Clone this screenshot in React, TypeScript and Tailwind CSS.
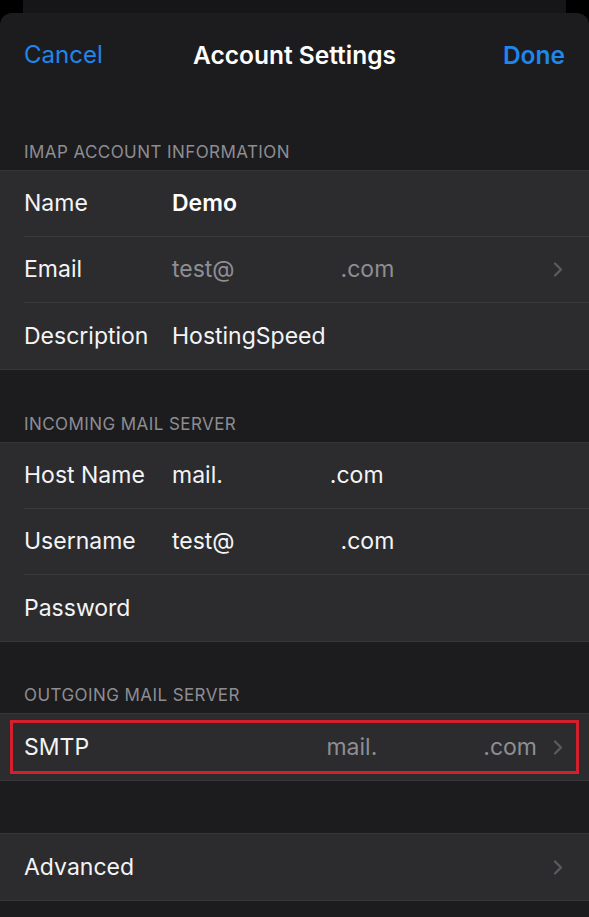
import type { ReactNode } from 'react';

const font = { fontFamily: 'Inter, "Noto Sans", "Liberation Sans", sans-serif' };

function Chevron() {
  return (
    <svg width="10" height="17" viewBox="0 0 10 17" className="shrink-0">
      <path d="M2 2.5 L8 8.5 L2 14.5" fill="none" stroke="#5b5b60" strokeWidth="2.2" strokeLinecap="round" strokeLinejoin="round" />
    </svg>
  );
}

function Gap({ w }: { w: string }) {
  return <span className={`inline-block ${w}`} />;
}

function SectionHeader({ title, h }: { title: string; h: string }) {
  return (
    <div className={`${h} flex items-end px-6 pb-[8px]`}>
      <span className="text-[17px] leading-5 tracking-[0.025em] text-[#8d8d93]">{title}</span>
    </div>
  );
}

function Row({ label, children, chevron, last }: { label: string; children?: ReactNode; chevron?: boolean; last?: boolean }) {
  return (
    <div className="pl-6 h-[66px] flex">
      <div className={`flex-1 flex items-center pr-[26px] ${last ? '' : 'border-b border-[#3a3a3c]'}`}>
        <span className="w-[148px] shrink-0 text-[23px] text-[#f4f4f6]">{label}</span>
        <div className="flex-1 flex items-center text-[23px]">{children}</div>
        {chevron && <Chevron />}
      </div>
    </div>
  );
}

function Group({ children }: { children: ReactNode }) {
  return <div className="bg-[#2c2c2e] border-y border-[#363638]">{children}</div>;
}

export default function App() {
  return (
    <div className="h-[917px] w-[589px] bg-black flex flex-col overflow-hidden" style={font}>
      <div className="mx-[23px] h-[13px] bg-[#161618] shrink-0" />
      <div className="flex-1 bg-[#1c1c1e] rounded-t-[12px]">
        {/* nav */}
        <div className="relative h-[84px] flex items-center justify-between px-6">
          <span className="text-[24px] text-[#1f86ea]">Cancel</span>
          <span className="absolute left-0 right-0 text-center text-[24.5px] font-semibold text-white pointer-events-none">
            Account Settings
          </span>
          <span className="text-[24.5px] font-semibold text-[#1f86ea]">Done</span>
        </div>

        <SectionHeader title="IMAP ACCOUNT INFORMATION" h="h-[73px]" />
        <Group>
          <Row label="Name">
            <span className="font-semibold text-white">Demo</span>
          </Row>
          <Row label="Email" chevron>
            <span className="text-[#8e8e93]">
              test@<Gap w="w-[106px]" />.com
            </span>
          </Row>
          <Row label="Description" last>
            <span className="text-[#f4f4f6]">HostingSpeed</span>
          </Row>
        </Group>

        <SectionHeader title="INCOMING MAIL SERVER" h="h-[72px]" />
        <Group>
          <Row label="Host Name">
            <span className="text-[#f4f4f6]">
              mail.<Gap w="w-[107px]" />.com
            </span>
          </Row>
          <Row label="Username">
            <span className="text-[#f4f4f6]">
              test@<Gap w="w-[106px]" />.com
            </span>
          </Row>
          <Row label="Password" last />
        </Group>

        <SectionHeader title="OUTGOING MAIL SERVER" h="h-[71px]" />
        <div className="relative">
          <Group>
            <div className="pl-6 h-[66px] flex items-center pr-[26px]">
              <span className="flex-1 text-[23px] text-[#f4f4f6]">SMTP</span>
              <span className="text-[23px] text-[#8e8e93] mr-[16px]">
                mail.<Gap w="w-[106px]" />.com
              </span>
              <Chevron />
            </div>
          </Group>
          <div className="absolute left-[10px] right-[10px] top-[7px] h-[54px] border-[3px] border-[#d3202c]" />
        </div>

        <div className="h-[52px]" />
        <Group>
          <Row label="Advanced" chevron last />
        </Group>
      </div>
    </div>
  );
}
